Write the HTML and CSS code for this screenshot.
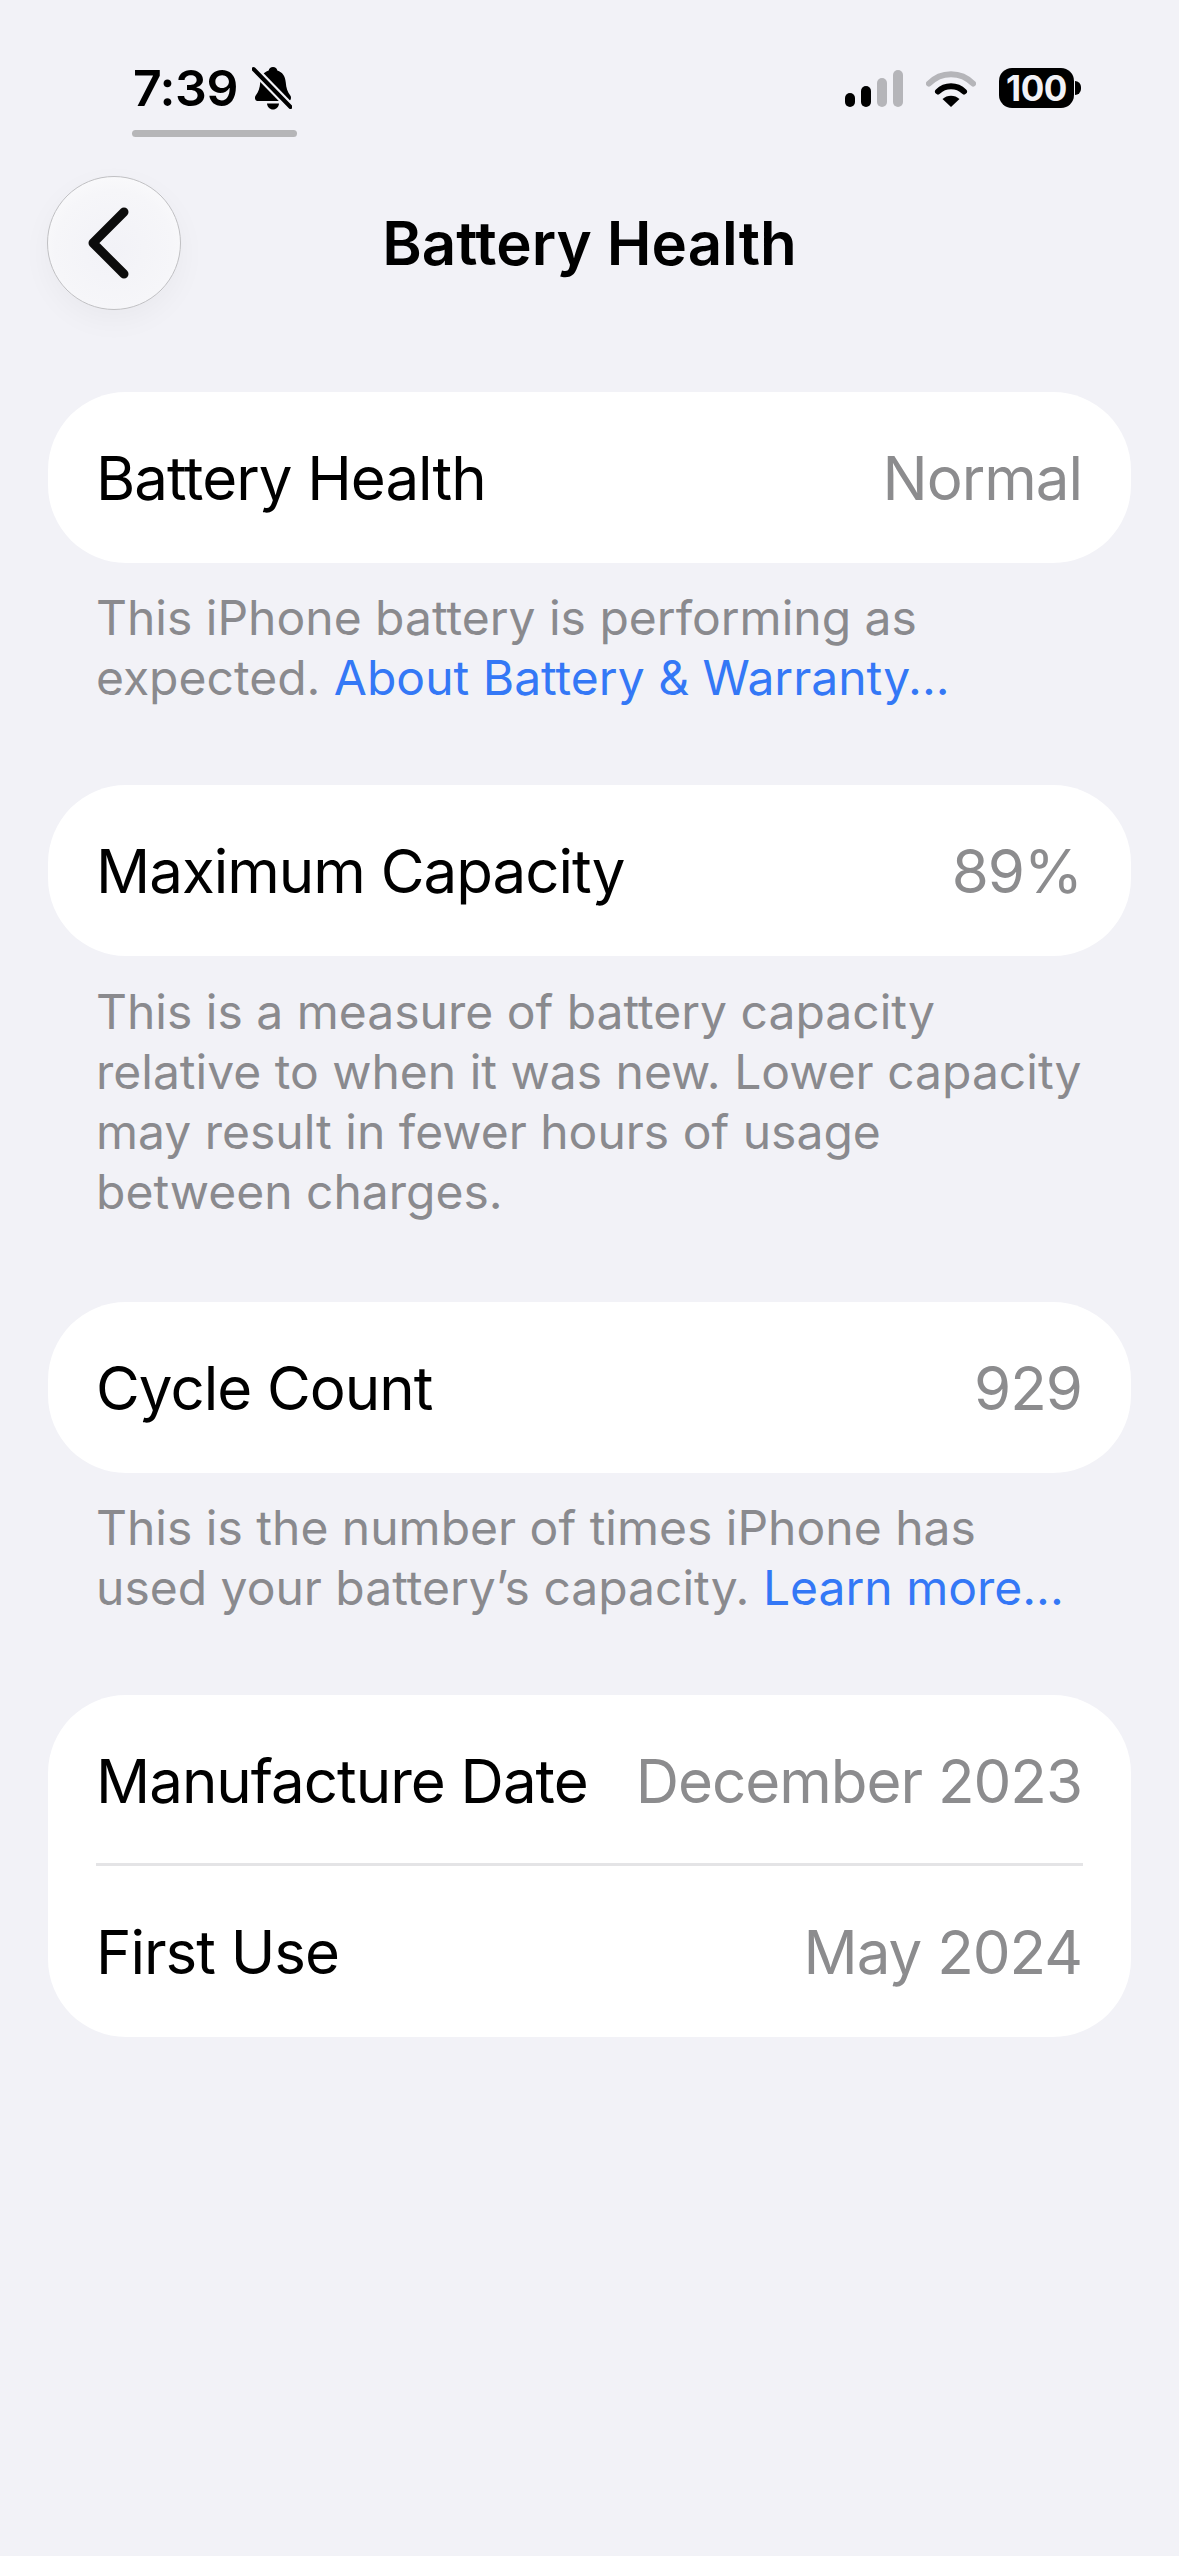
FILE: index.html
```html
<!DOCTYPE html>
<html lang="en">
<head>
    <meta charset="UTF-8">
    <meta name="viewport" content="width=device-width, initial-scale=1.0">
    <title>Battery Health</title>
    <link rel="stylesheet" href="styles.css">
</head>
<body>
    <div class="status-bar">
        <div class="status-left">
            <div class="clock">
                <span class="time">7:39</span>
                <svg class="bell" width="40" height="44" viewBox="0 0 40 44">
                    <path d="M21 1C23.4 1 24.9 2.4 25.3 4.500 30.500 6 33.200 10.500 33.700 16 34.200 22 35.500 26 38.300 29.500 39.700 31.300 38.900 35 36.500 35H5.500C3.100 35 2.300 31.300 3.700 29.500 6.500 26 7.800 22 8.300 16 8.800 10.500 11.500 6 16.700 4.500 17.100 2.400 18.600 1 21 1Z" fill="#000"/>
                    <path d="M15 37.500H27C26.700 41 24.200 43.500 21 43.500S15.300 41 15 37.500Z" fill="#000"/>
                    <path d="M1.500 3 38.500 41" stroke="#f2f2f7" stroke-width="8.500"/>
                    <path d="M1.500 3 38.500 41" stroke="#000" stroke-width="4" stroke-linecap="round"/>
                </svg>
            </div>
            <div class="focus-line"></div>
        </div>
        <div class="status-right">
            <svg width="58" height="37" viewBox="0 0 58 37">
                <rect x="0" y="23" width="10" height="14" rx="5" fill="#000"/>
                <rect x="16" y="16" width="10" height="21" rx="5" fill="#000"/>
                <rect x="32" y="8" width="10" height="29" rx="5" fill="#b5b5b9"/>
                <rect x="48" y="0" width="10" height="37" rx="5" fill="#b5b5b9"/>
            </svg>
            <svg width="50" height="37" viewBox="0 0 50 37">
                <path d="M3 13.500C15 1 35 1 47 13.500" fill="none" stroke="#b5b5b9" stroke-width="6" stroke-linecap="round"/>
                <path d="M12 21.500C19 14.500 31 14.500 38 21.500" fill="none" stroke="#000" stroke-width="6" stroke-linecap="round"/>
                <path d="M25 37 16.500 29c4.500-4.500 12.500-4.500 17 0z" fill="#000"/>
            </svg>
            <div class="battery">
                <div class="battery-body">100</div>
                <div class="battery-tip"></div>
            </div>
        </div>
    </div>

    <div class="nav">
        <div class="back-btn">
            <svg width="44" height="74" viewBox="0 0 44 74">
                <path d="M38 6 7 37l31 31" fill="none" stroke="#0c0c0c" stroke-width="9" stroke-linecap="round" stroke-linejoin="round"/>
            </svg>
        </div>
        <div class="nav-title">Battery Health</div>
    </div>

    <div class="content">
        <div class="card">
            <div class="row"><span>Battery Health</span><span class="value">Normal</span></div>
        </div>
        <p class="note">This iPhone battery is performing as<br>expected. <a href="#">About Battery &amp; Warranty...</a></p>

        <div class="card">
            <div class="row"><span>Maximum Capacity</span><span class="value">89%</span></div>
        </div>
        <p class="note note-long">This is a measure of battery capacity<br>relative to when it was new. Lower capacity<br>may result in fewer hours of usage<br>between charges.</p>

        <div class="card">
            <div class="row"><span>Cycle Count</span><span class="value">929</span></div>
        </div>
        <p class="note">This is the number of times iPhone has<br>used your battery’s capacity. <a href="#">Learn more...</a></p>

        <div class="card">
            <div class="row"><span>Manufacture Date</span><span class="value">December 2023</span></div>
            <div class="divider"></div>
            <div class="row"><span>First Use</span><span class="value">May 2024</span></div>
        </div>
    </div>
</body>
</html>
```

FILE: styles.css
```css
* {
    box-sizing: border-box;
}
body {
    margin: 0;
    height: 2556px;
    overflow: hidden;
    background: #f2f2f7;
    font-family: Inter, "Liberation Sans", sans-serif;
    color: #000;
}
.status-bar {
    display: flex;
    justify-content: space-between;
    align-items: flex-start;
    height: 176px;
    padding: 64px 98px 0 132px;
}
.clock {
    display: flex;
    align-items: center;
    gap: 14px;
    height: 48px;
    padding-left: 1px;
}
.time {
    font-size: 50px;
    font-weight: 600;
    letter-spacing: -0.5px;
}
.focus-line {
    width: 165px;
    height: 7px;
    margin-top: 18px;
    border-radius: 4px;
    background: #b6b6b8;
}
.status-right {
    display: flex;
    align-items: center;
    gap: 23px;
    height: 48px;
}
.battery {
    display: flex;
    align-items: center;
    gap: 1px;
}
.battery-body {
    width: 75px;
    height: 40px;
    border-radius: 13px;
    background: #000;
    color: #f2f2f7;
    font-size: 35px;
    font-weight: 700;
    line-height: 40px;
    text-align: center;
    letter-spacing: -0.5px;
}
.battery-tip {
    width: 6px;
    height: 14px;
    border-radius: 0 7px 7px 0;
    background: #000;
}
.nav {
    position: relative;
    display: flex;
    align-items: center;
    height: 134px;
    padding-left: 47px;
}
.back-btn {
    display: flex;
    align-items: center;
    justify-content: center;
    width: 134px;
    height: 134px;
    padding-right: 12px;
    border-radius: 50%;
    border: 1.5px solid #c0c0c3;
    background: radial-gradient(circle at 50% 55%, #f2f2f7 0%, #f6f6f9 60%, #fefefe 100%);
    box-shadow: 0 10px 30px rgba(0,0,0,0.04);
}
.nav-title {
    position: absolute;
    left: 0;
    right: 0;
    text-align: center;
    font-size: 60px;
    font-weight: 600;
}
.content {
    padding: 82px 48px 0 48px;
}
.card {
    background: white;
    border-radius: 78px;
    padding: 0 48px;
}
.row {
    display: flex;
    justify-content: space-between;
    align-items: center;
    height: 171px;
    font-size: 60px;
    letter-spacing: -1px;
}
.value {
    margin-right: 1px;
    color: #8c8c8e;
}
.divider {
    height: 3px;
    margin-top: -3px;
    background: #e4e4e6;
}
.note {
    margin: 25px 0 77px 0;
    padding: 0 48px;
    font-size: 48px;
    line-height: 60px;
    color: #8a8a8e;
}
.note-long {
    margin-top: 26px;
    margin-bottom: 80px;
}
.note a {
    color: #3478f6;
    text-decoration: none;
}
```
